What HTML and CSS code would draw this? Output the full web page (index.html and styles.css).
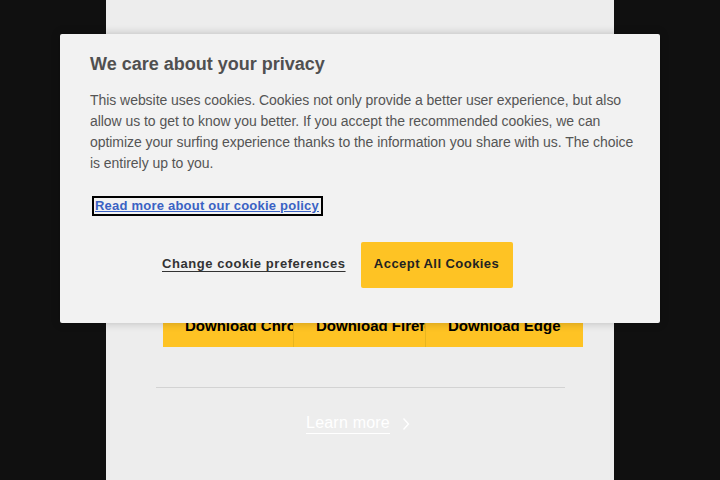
FILE: index.html
```html
<!DOCTYPE html>
<html lang="en">
<head>
<meta charset="utf-8">
<title>Download</title>
<link rel="stylesheet" href="styles.css">
</head>
<body>
<main class="panel">
  <div class="downloads">
    <a class="dl dl-chrome" href="#">Download Chrome</a>
    <a class="dl dl-firefox" href="#">Download Firefox</a>
    <a class="dl dl-edge" href="#">Download Edge</a>
  </div>
  <hr class="divider">
  <a class="learn" href="#"><span class="learn-text">Learn more</span>
    <svg class="chev" width="8" height="14" viewBox="0 0 8 14"><path d="M1.5 1.5 L6.5 7 L1.5 12.5" fill="none" stroke="#fff" stroke-width="1.4"/></svg>
  </a>
</main>

<section class="cookie" role="dialog">
  <h2 class="cookie-title">We care about your privacy</h2>
  <p class="cookie-text">This website uses cookies. Cookies not only provide a better user experience, but also allow us to get to know you better. If you accept the recommended cookies, we can optimize your surfing experience thanks to the information you share with us. The choice is entirely up to you.</p>
  <a class="policy" href="#">Read more about our cookie policy</a>
  <div class="cookie-actions">
    <a class="prefs" href="#">Change cookie preferences</a>
    <button class="accept">Accept All Cookies</button>
  </div>
</section>
</body>
</html>
```

FILE: styles.css
```css
html, body {
  margin: 0;
  padding: 0;
  height: 100%;
}
body {
  background: #101010;
  font-family: "Liberation Sans", Arial, sans-serif;
  overflow: hidden;
}
.panel {
  width: 508px;
  height: 480px;
  margin: 0 auto;
  background: #ededed;
  display: flex;
  flex-direction: column;
  padding-top: 305px;
  box-sizing: border-box;
}
.downloads {
  display: flex;
  margin-left: 57px;
  width: 420px;
  height: 42px;
  background: #fec324;
}
.dl {
  display: block;
  box-sizing: border-box;
  padding: 12px 0 0 22px;
  height: 42px;
  overflow: hidden;
  white-space: nowrap;
  color: #000;
  text-decoration: none;
  font-weight: bold;
  font-size: 15px;
  border-right: 1px solid #e8b51f;
}
.dl-chrome { width: 131px; }
.dl-firefox { width: 132px; }
.dl-edge { width: 157px; border-right: 0; }
.divider {
  margin: 40px 49px 0 50px;
  border: 0;
  height: 1px;
  background: #d3d3d3;
}
.learn {
  align-self: center;
  margin-top: 26px;
  margin-right: 4px;
  display: flex;
  align-items: center;
  gap: 12px;
  color: #fff;
  text-decoration: none;
  font-size: 16px;
  letter-spacing: 0.2px;
}
.learn-text {
  border-bottom: 1px solid #fff;
  padding-bottom: 1px;
}
.cookie {
  position: absolute;
  top: 34px;
  left: 60px;
  width: 600px;
  height: 289px;
  box-sizing: border-box;
  padding: 19px 20px 0 30px;
  background: #f2f2f2;
  border-radius: 2px;
  box-shadow: 0 0 10px rgba(0,0,0,0.22);
}
.cookie-title {
  margin: 0;
  font-size: 18px;
  line-height: 22px;
  font-weight: bold;
  color: #505050;
}
.cookie-text {
  margin: 15px 0 0 0;
  font-size: 14px;
  line-height: 21px;
  color: #555;
  letter-spacing: -0.05px;
}
.policy {
  display: inline-block;
  margin: 22px 0 0 2px;
  padding: 1px 2px 2px 1px;
  border: 2px solid #000;
  font-size: 13px;
  line-height: 13px;
  font-weight: bold;
  color: #3a62c4;
  text-decoration: underline;
  letter-spacing: 0.22px;
}
.cookie-actions {
  display: flex;
  align-items: center;
  gap: 15px;
  margin: 26px 0 0 72px;
}
.prefs {
  font-size: 13px;
  font-weight: bold;
  color: #333;
  letter-spacing: 0.55px;
  text-decoration: underline;
  text-underline-offset: 3px;
  margin-bottom: 3px;
}
.accept {
  width: 152px;
  height: 46px;
  border: 0;
  border-radius: 2px;
  background: #fec324;
  color: #222;
  font-family: "Liberation Sans", Arial, sans-serif;
  font-size: 13px;
  font-weight: bold;
  letter-spacing: 0.45px;
  padding: 0 0 3px 0;
}
```
